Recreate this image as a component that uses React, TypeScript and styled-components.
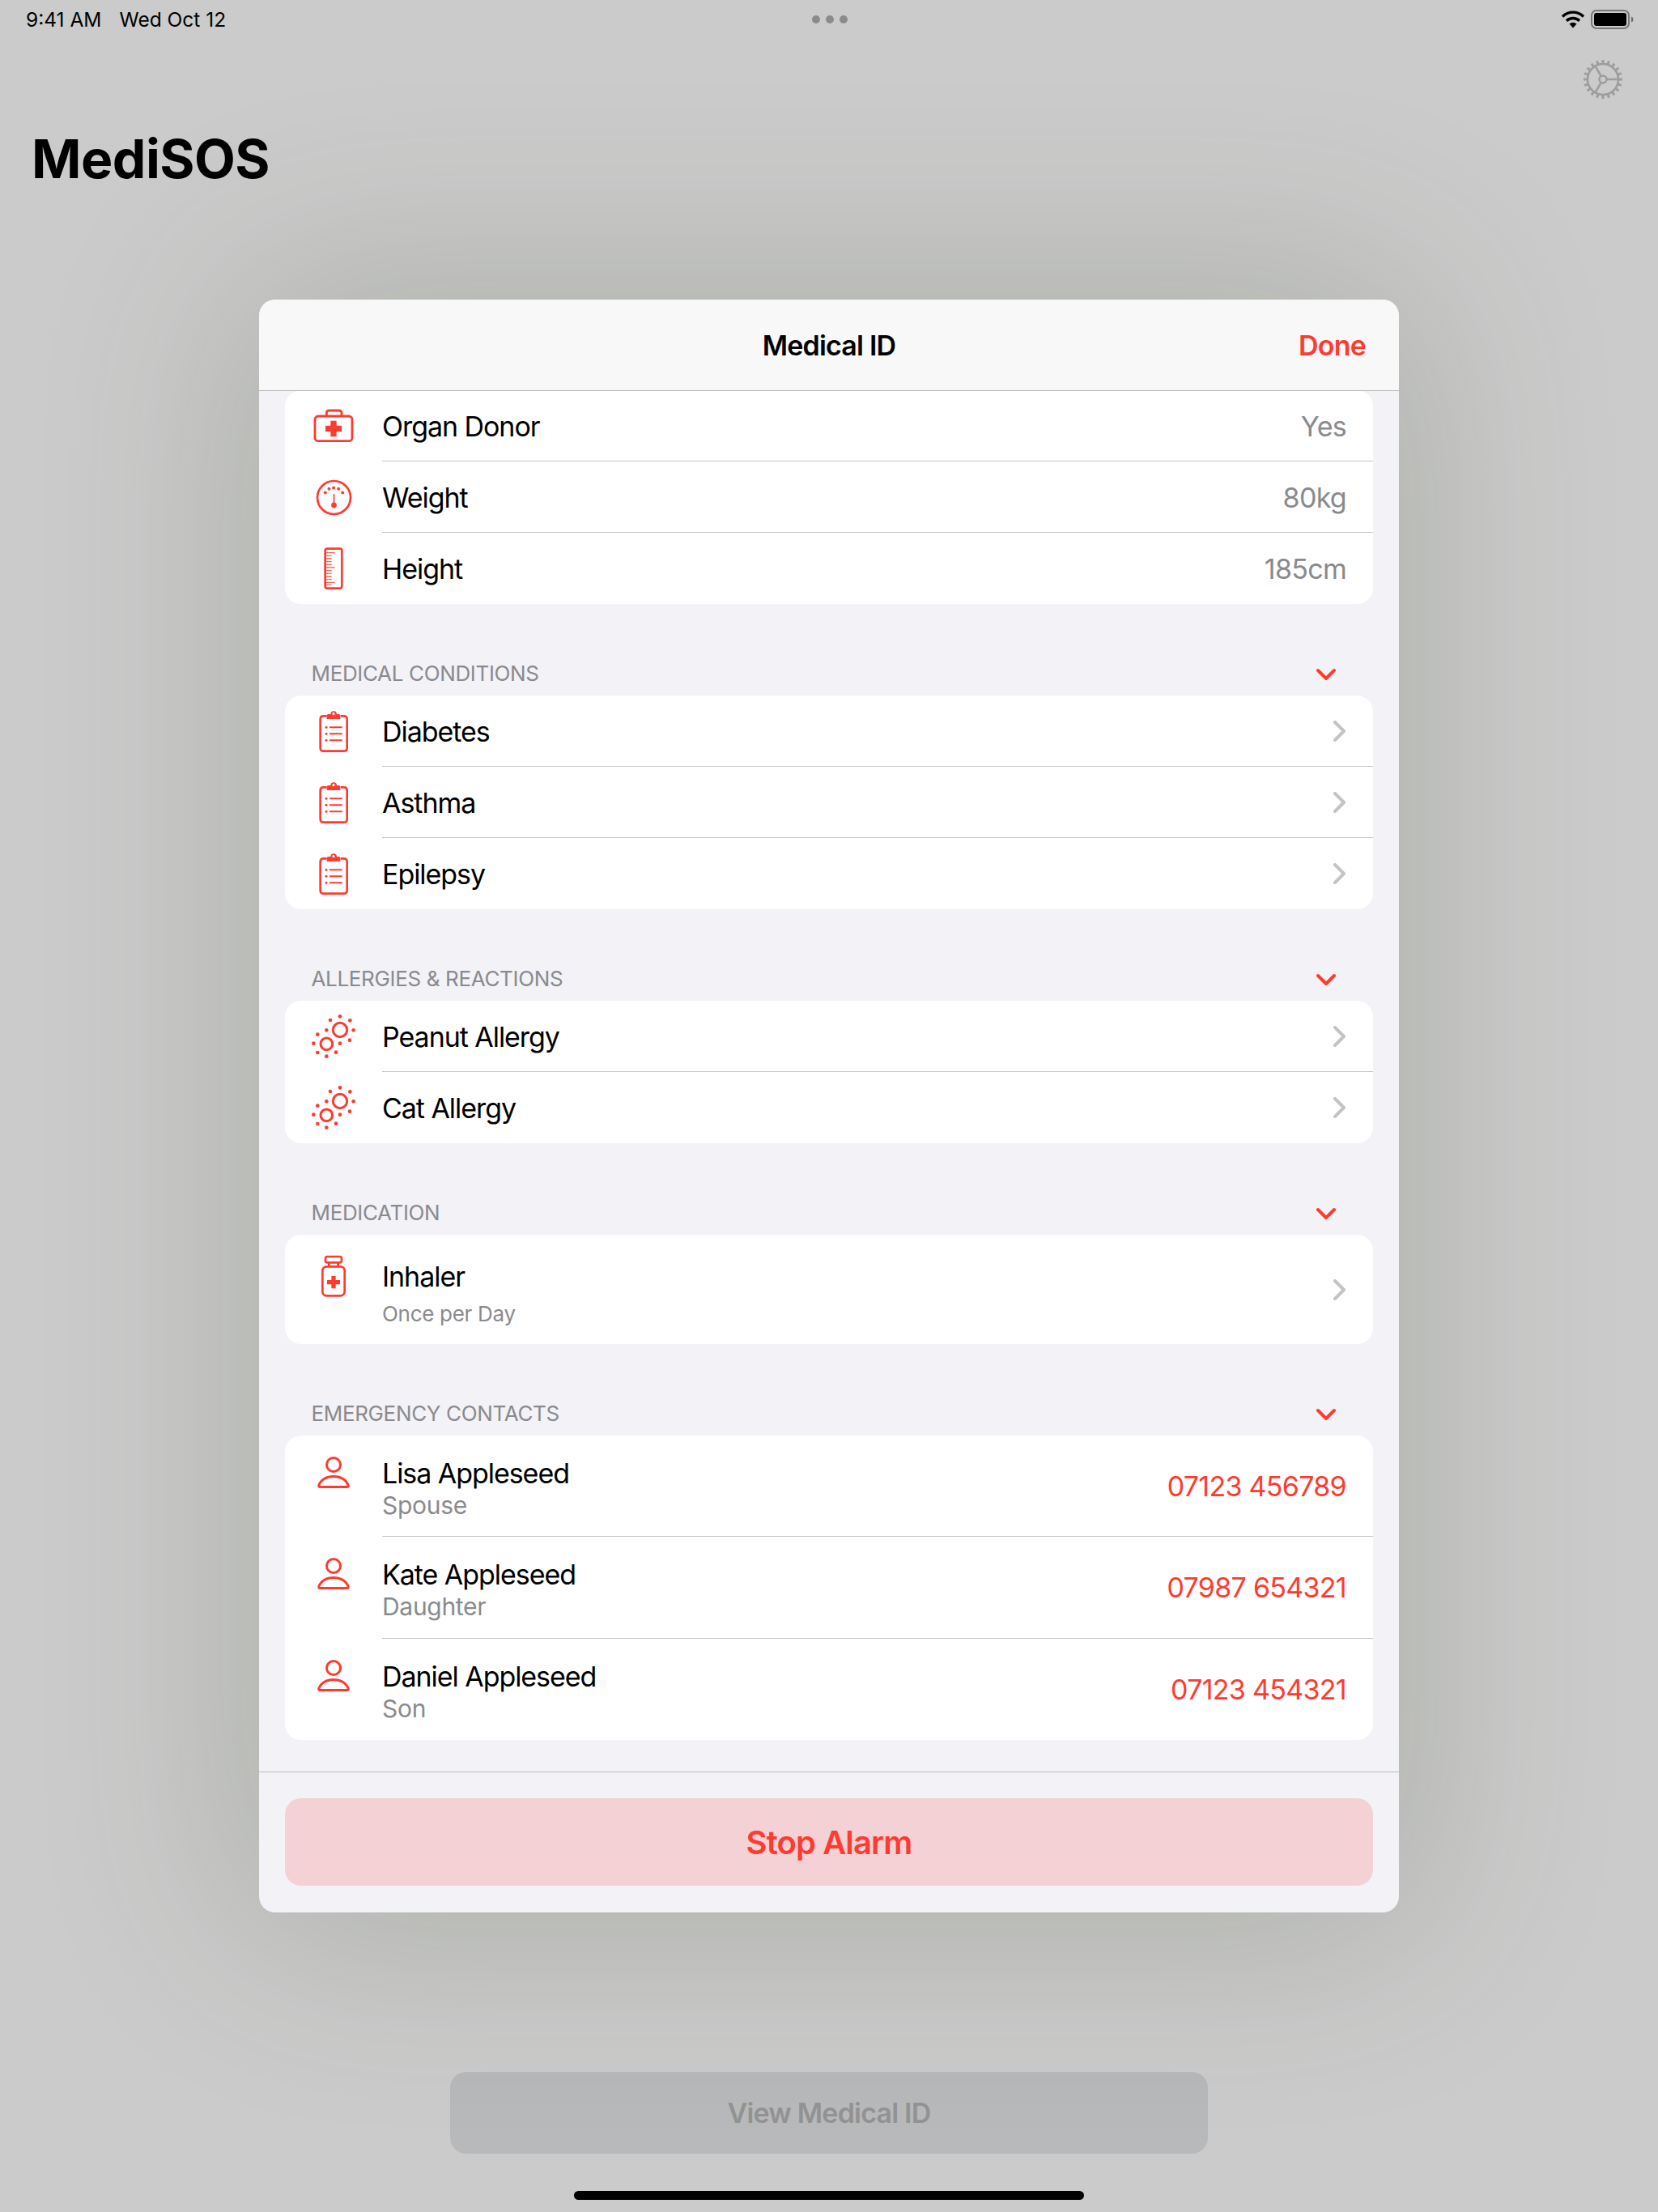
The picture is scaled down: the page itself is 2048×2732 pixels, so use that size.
import React from "react";
import styled, { createGlobalStyle } from "styled-components";

const RED = "#ff3b30";
const GREY = "#8a8a8e";

const GlobalStyle = createGlobalStyle`
    html, body {
        margin: 0;
        padding: 0;
    }
    body {
        font-family: Inter, "Liberation Sans", sans-serif;
        -webkit-font-smoothing: antialiased;
    }
`

const Page = styled.div`
    position: relative;
    display: flex;
    flex-direction: column;
    width: 2048px;
    height: 2732px;
    overflow: hidden;
    background-color: #cbcbcb;
`
const StatusBar = styled.div`
    display: grid;
    grid-template-columns: 1fr auto 1fr;
    align-items: center;
    height: 48px;
    padding: 0 30px 0 32px;
    font-size: 24.5px;
    color: #000;
`
const Clock = styled.div`
    display: flex;
    gap: 22px;
`
const Dots = styled.div`
    display: flex;
    gap: 7px;
    & span {
        width: 10px;
        height: 10px;
        border-radius: 50%;
        background-color: #8b8b8b;
    }
`
const StatusIcons = styled.div`
    display: flex;
    justify-content: flex-end;
    align-items: center;
    gap: 7px;
`
const TopBar = styled.div`
    display: flex;
    justify-content: flex-end;
    padding: 25px 43px 0 0;
    height: 50px;
`
const Title = styled.h1`
    margin: 33px 0 0 39px;
    font-size: 66px;
    line-height: 80px;
    font-weight: 700;
    letter-spacing: -0.5px;
    color: #000;
`
const ViewButton = styled.div`
    display: flex;
    align-items: center;
    justify-content: center;
    width: 936px;
    height: 101px;
    margin: auto auto 46px;
    border-radius: 20px;
    background-color: #b8b9bb;
    color: #939393;
    font-size: 34px;
    font-weight: 600;
    letter-spacing: -0.8px;
`
const HomeBar = styled.div`
    width: 630px;
    height: 11px;
    margin: 0 auto 15px;
    border-radius: 6px;
    background-color: #000;
`
const Modal = styled.div`
    position: absolute;
    top: 370px;
    left: 320px;
    display: flex;
    flex-direction: column;
    width: 1408px;
    height: 1992px;
    overflow: hidden;
    border-radius: 20px;
    background-color: #f2f2f7;
    box-shadow: 0 0 260px 20px rgba(53, 70, 36, 0.2);
`
const ModalHeader = styled.div`
    position: relative;
    z-index: 1;
    display: flex;
    align-items: center;
    justify-content: center;
    flex: none;
    box-sizing: border-box;
    height: 113px;
    margin-bottom: -1px;
    border-bottom: 1px solid #b4b4b6;
    background-color: #f8f8f8;
    font-size: 34px;
    font-weight: 600;
    letter-spacing: -0.8px;
    color: #000;
`
const DoneLink = styled.span`
    position: absolute;
    right: 41px;
    color: ${RED};
`
const ModalBody = styled.div`
    flex: 1;
    min-height: 0;
    padding: 0 32px;
    overflow: hidden;
`
const ModalFooter = styled.div`
    flex: none;
    padding: 32px 32px 33px;
    border-top: 1px solid #bcbcc0;
`
const StopButton = styled.div`
    display: flex;
    align-items: center;
    justify-content: center;
    height: 108px;
    border-radius: 20px;
    background-color: #f3d1d4;
    color: ${RED};
    font-size: 40px;
    font-weight: 600;
    letter-spacing: -0.9px;
`
const SectionHeader = styled.div`
    display: flex;
    align-items: center;
    justify-content: space-between;
    height: 113px;
    box-sizing: border-box;
    padding: 58px 46px 0 32.5px;
    font-size: 26px;
    letter-spacing: -0.35px;
    color: ${GREY};
    & svg {
        margin-top: 2px;
    }
`
const Card = styled.div`
    overflow: hidden;
    border-radius: 20px;
    background-color: #fff;
`
const Row = styled.div<{ $height?: number }>`
    display: flex;
    height: ${(p) => p.$height ?? 88}px;
`
const IconCell = styled.div<{ $top?: number }>`
    display: flex;
    align-items: ${(p) => (p.$top ? "flex-start" : "center")};
    justify-content: center;
    flex: none;
    box-sizing: border-box;
    width: 120px;
    padding-top: ${(p) => p.$top ?? 0}px;
`
const RowContent = styled.div<{ $last?: boolean }>`
    display: flex;
    align-items: center;
    justify-content: space-between;
    flex: 1;
    min-width: 0;
    padding-right: 33px;
    box-shadow: ${(p) => (p.$last ? "none" : "inset 0 -1px 0 #c6c6c8")};
`
const TextStack = styled.div<{ $top?: number }>`
    align-self: ${(p) => (p.$top ? "flex-start" : "center")};
    padding-top: ${(p) => p.$top ?? 2}px;
`
const Label = styled.div`
    font-size: 34px;
    line-height: 40px;
    letter-spacing: -1.05px;
    color: #000;
`
const SubLabel = styled.div<{ $small?: boolean }>`
    font-size: ${(p) => (p.$small ? 26 : 30)}px;
    line-height: ${(p) => (p.$small ? 34 : 38)}px;
    margin-top: ${(p) => (p.$small ? 9 : 0)}px;
    letter-spacing: -0.3px;
    color: ${GREY};
`
const Value = styled.div<{ $red?: boolean }>`
    font-size: 34px;
    letter-spacing: -0.7px;
    color: ${(p) => (p.$red ? RED : GREY)};
`

const Chevron = () => (
    <svg width="24" height="16" viewBox="0 0 24 16" fill="none" stroke={RED} strokeWidth="4" strokeLinecap="round" strokeLinejoin="round">
        <path d="M2 3l10 10L22 3" />
    </svg>
)

const Disclosure = () => (
    <svg width="16" height="26" viewBox="0 0 16 26" fill="none" stroke="#c4c4c6" strokeWidth="4" strokeLinecap="round" strokeLinejoin="round">
        <path d="M2 2l11 11L2 24" />
    </svg>
)

// icon drawings use coordinates read from the 3x crops, so viewBox / 3 = pixels
const MedKit = () => (
    <svg width="52" height="44" viewBox="140 74 156 132" fill="none" stroke={RED} strokeWidth="8.5">
        <rect x="149" y="104" width="138" height="92" rx="12" />
        <path d="M192 104V93q0-10 10-10h36q10 0 10 10v11" />
        <path stroke="none" fill={RED} d="M207 121h22v18h19v22h-19v19h-22v-19h-19v-22h19z" />
    </svg>
)

const Gauge = () => (
    <svg width="47" height="47" viewBox="145 333 140 140" fill="none" stroke={RED} strokeWidth="8">
        <circle cx="215" cy="403" r="61" />
        <g fill={RED} stroke="none">
            <circle cx="183" cy="385" r="6" />
            <circle cx="197" cy="371" r="6" />
            <circle cx="214" cy="367" r="6" />
            <circle cx="232" cy="371" r="6" />
            <circle cx="247" cy="385" r="6" />
            <circle cx="215" cy="431" r="10" />
        </g>
        <path d="M215 390v40" strokeWidth="5" />
    </svg>
)

const RULER_TICKS = [606, 617, 628, 639, 650, 661, 672, 683, 694, 705, 716, 725];

const Ruler = () => (
    <svg width="26" height="54" viewBox="178 583 78 162" fill="none" stroke={RED}>
        <rect x="186" y="591" width="62" height="147" rx="8" strokeWidth="8" />
        {RULER_TICKS.map((y, i) => (
            <path key={y} d={`M190 ${y}h${i % 5 === 0 ? 32 : 20}`} strokeWidth="4" opacity="0.8" />
        ))}
    </svg>
)

const Clipboard = () => (
    <svg width="39" height="54" viewBox="158 48 117 162" fill="none" stroke={RED} strokeWidth="8">
        <path d="M190 73h-12q-12 0-12 12v106q0 12 12 12h75q12 0 12-12V85q0-12-12-12h-12" />
        <path stroke="none" fill={RED} fillRule="evenodd" d="M190 84V72q0-6 6-6h8a11.500 11.500 0 0 1 23 0h7q6 0 6 6v12zM215 60a5 5 0 1 0 .01 0z" />
        <path d="M200 115h47M200 139h47M200 163h47" strokeWidth="6" />
        <g fill={RED} stroke="none">
            <circle cx="188" cy="115" r="4.500" />
            <circle cx="188" cy="139" r="4.500" />
            <circle cx="188" cy="163" r="4.500" />
        </g>
    </svg>
)

const ALLERGY_DOTS = [
    [240, 48], [204, 62], [277, 63], [190, 99], [290, 99], [157, 115],
    [276, 136], [240, 148], [142, 148], [157, 182], [225, 181], [190, 196],
];

const Allergy = () => (
    <svg width="56" height="56" viewBox="132 38 168 168" fill="none" stroke={RED} strokeWidth="9">
        <circle cx="240" cy="98" r="26" />
        <circle cx="190" cy="150" r="22" />
        {ALLERGY_DOTS.map(([cx, cy]) => (
            <circle key={`${cx}-${cy}`} cx={cx} cy={cy} r="7" fill={RED} stroke="none" />
        ))}
    </svg>
)

const Bottle = () => (
    <svg width="36" height="54" viewBox="164 932 108 162" fill="none" stroke={RED} strokeWidth="8">
        <rect x="188" y="938" width="60" height="22" rx="7" />
        <path d="M201 960v15M235 960v15" />
        <rect x="177" y="975" width="82" height="108" rx="15" />
        <path stroke="none" fill={RED} d="M210 1010h16v15h16v16h-16v15h-16v-15h-16v-16h16z" />
    </svg>
)

const Person = () => (
    <svg width="40" height="40" viewBox="0 0 40 40" fill="none" stroke={RED} strokeWidth="3">
        <circle cx="20" cy="10" r="8.500" />
        <path d="M3 37.500h34c1 0 1.500-.8 1.200-1.700C36 29 29 24.500 20 24.500S4 29 1.800 35.800c-.3.900.2 1.700 1.200 1.700z" strokeLinejoin="round" />
    </svg>
)

const Gear = () => {
    const teeth = Array.from({ length: 20 }, (_, i) => i * 18);
    return (
        <svg width="50" height="50" viewBox="-25 -25 50 50" fill="none" stroke="#9d9d9d" strokeWidth="2.600">
            <circle r="19" />
            <circle r="4.500" />
            <path d="M4.500 0H19M-2.250-3.900L-9.500-16.450M-2.250 3.900L-9.500 16.450" />
            {teeth.map((deg) => (
                <path key={deg} d="M0-19v-5" strokeWidth="3" transform={`rotate(${deg})`} />
            ))}
        </svg>
    )
}

const Wifi = () => (
    <svg width="30" height="22" viewBox="0 0 30 22" fill="none" stroke="#000" strokeWidth="3.400">
        <path d="M2 7.500a18.500 18.500 0 0 1 26 0" />
        <path d="M7 12.800a11.500 11.500 0 0 1 16 0" />
        <path stroke="none" fill="#000" d="M10.500 16.500a6.500 6.500 0 0 1 9 0L15 21.500z" />
    </svg>
)

const Battery = () => (
    <svg width="53" height="24" viewBox="0 0 53 24" fill="none">
        <rect x="1" y="1" width="46" height="22" rx="6" stroke="#777" strokeWidth="2" />
        <rect x="4" y="4" width="40" height="16" rx="3" fill="#000" />
        <path d="M50 8.500c1.800.5 2.500 2 2.500 3.500s-.7 3-2.500 3.500z" fill="#6e6e6e" />
    </svg>
)

type Item = {
    icon: React.ReactNode
    label: string
    value?: string
    more?: boolean
}

const vitals: Item[] = [
    { icon: <MedKit />, label: "Organ Donor", value: "Yes" },
    { icon: <Gauge />, label: "Weight", value: "80kg" },
    { icon: <Ruler />, label: "Height", value: "185cm" },
]

const conditions: Item[] = [
    { icon: <Clipboard />, label: "Diabetes", more: true },
    { icon: <Clipboard />, label: "Asthma", more: true },
    { icon: <Clipboard />, label: "Epilepsy", more: true },
]

const allergies: Item[] = [
    { icon: <Allergy />, label: "Peanut Allergy", more: true },
    { icon: <Allergy />, label: "Cat Allergy", more: true },
]

const contacts = [
    { name: "Lisa Appleseed", relation: "Spouse", phone: "07123 456789" },
    { name: "Kate Appleseed", relation: "Daughter", phone: "07987 654321" },
    { name: "Daniel Appleseed", relation: "Son", phone: "07123 454321" },
]

const SimpleCard: React.FC<{ items: Item[] }> = ({ items }) => (
    <Card>
        {items.map((item, i) => (
            <Row key={item.label}>
                <IconCell>{item.icon}</IconCell>
                <RowContent $last={i === items.length - 1}>
                    <TextStack>
                        <Label>{item.label}</Label>
                    </TextStack>
                    {item.value && <Value>{item.value}</Value>}
                    {item.more && <Disclosure />}
                </RowContent>
            </Row>
        ))}
    </Card>
)

const Section: React.FC<{ title: string; children: React.ReactNode }> = ({ title, children }) => (
    <>
        <SectionHeader>
            <span>{title}</span>
            <Chevron />
        </SectionHeader>
        {children}
    </>
)

const App: React.FC = () => {
    return (
        <Page>
            <GlobalStyle />
            <StatusBar>
                <Clock>
                    <span>9:41 AM</span>
                    <span>Wed Oct 12</span>
                </Clock>
                <Dots>
                    <span />
                    <span />
                    <span />
                </Dots>
                <StatusIcons>
                    <Wifi />
                    <Battery />
                </StatusIcons>
            </StatusBar>
            <TopBar>
                <Gear />
            </TopBar>
            <Title>MediSOS</Title>
            <ViewButton>View Medical ID</ViewButton>
            <HomeBar />
            <Modal>
                <ModalHeader>
                    Medical ID
                    <DoneLink>Done</DoneLink>
                </ModalHeader>
                <ModalBody>
                    <SimpleCard items={vitals} />
                    <Section title="MEDICAL CONDITIONS">
                        <SimpleCard items={conditions} />
                    </Section>
                    <Section title="ALLERGIES & REACTIONS">
                        <SimpleCard items={allergies} />
                    </Section>
                    <Section title="MEDICATION">
                        <Card>
                            <Row $height={135}>
                                <IconCell $top={25}>
                                    <Bottle />
                                </IconCell>
                                <RowContent $last>
                                    <TextStack $top={32}>
                                        <Label>Inhaler</Label>
                                        <SubLabel $small>Once per Day</SubLabel>
                                    </TextStack>
                                    <Disclosure />
                                </RowContent>
                            </Row>
                        </Card>
                    </Section>
                    <Section title="EMERGENCY CONTACTS">
                        <Card>
                            {contacts.map((c, i) => (
                                <Row key={c.name} $height={125.3}>
                                    <IconCell $top={26}>
                                        <Person />
                                    </IconCell>
                                    <RowContent $last={i === contacts.length - 1}>
                                        <TextStack $top={27}>
                                            <Label>{c.name}</Label>
                                            <SubLabel>{c.relation}</SubLabel>
                                        </TextStack>
                                        <Value $red>{c.phone}</Value>
                                    </RowContent>
                                </Row>
                            ))}
                        </Card>
                    </Section>
                </ModalBody>
                <ModalFooter>
                    <StopButton>Stop Alarm</StopButton>
                </ModalFooter>
            </Modal>
        </Page>
    );
}

export default App;
